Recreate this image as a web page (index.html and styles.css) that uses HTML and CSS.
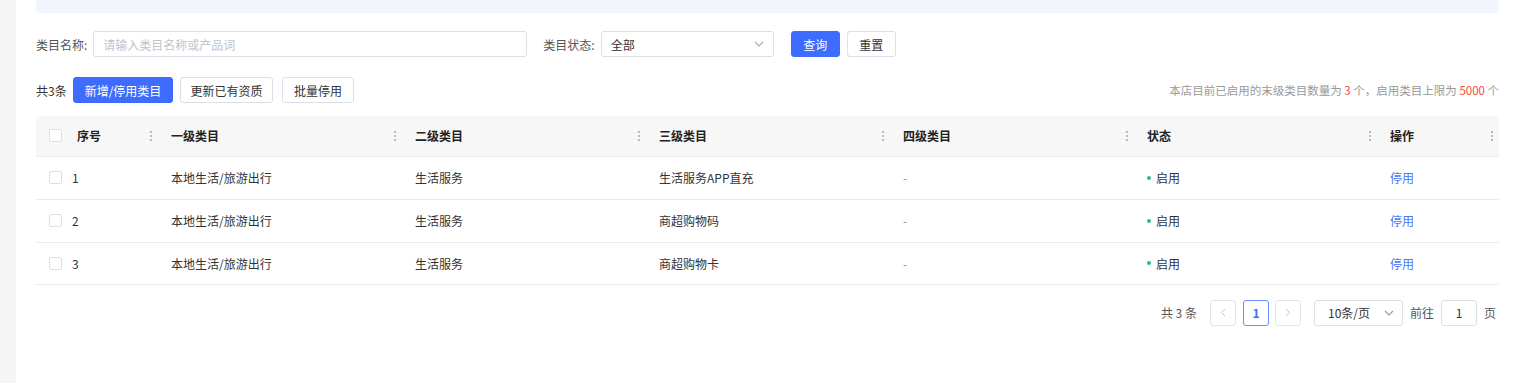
FILE: index.html
```html
<!DOCTYPE html>
<html lang="zh">
<head>
<meta charset="utf-8">
<link rel="stylesheet" href="styles.css">
</head>
<body>
<div class="page">
  <aside class="side"></aside>
  <main class="main">
    <div class="banner"></div>
    <div class="filters">
      <span class="label">类目名称:</span>
      <div class="input name-input"><span class="placeholder">请输入类目名称或产品词</span></div>
      <span class="label status-label">类目状态:</span>
      <div class="input select status-select"><span>全部</span>
        <svg class="arrow" width="10" height="6" viewBox="0 0 10 6"><path d="M1 1l4 4 4-4" fill="none" stroke="#aaa" stroke-width="1.1"/></svg>
      </div>
      <button class="btn primary search">查询</button>
      <button class="btn reset">重置</button>
    </div>
    <div class="toolbar">
      <span class="count">共3条</span>
      <button class="btn primary add">新增/停用类目</button>
      <button class="btn update">更新已有资质</button>
      <button class="btn batch">批量停用</button>
      <span class="info">本店目前已启用的末级类目数量为 <em>3</em> 个，启用类目上限为 <em>5000</em> 个</span>
    </div>
    <table class="grid">
      <colgroup>
        <col class="c0"><col class="c1"><col class="c1"><col class="c1"><col class="c1"><col class="c5"><col>
      </colgroup>
      <thead>
        <tr>
          <th><div class="first"><span class="cb"></span><span>序号</span></div><i class="sep"></i></th>
          <th>一级类目<i class="sep"></i></th>
          <th>二级类目<i class="sep"></i></th>
          <th>三级类目<i class="sep"></i></th>
          <th>四级类目<i class="sep"></i></th>
          <th>状态<i class="sep"></i></th>
          <th>操作<i class="sep last"></i></th>
        </tr>
      </thead>
      <tbody>
        <tr>
          <td><div class="first"><span class="cb"></span><span>1</span></div></td>
          <td>本地生活/旅游出行</td><td>生活服务</td><td>生活服务APP直充</td><td class="dash">-</td>
          <td><span class="dot"></span>启用</td><td><a class="link">停用</a></td>
        </tr>
        <tr>
          <td><div class="first"><span class="cb"></span><span>2</span></div></td>
          <td>本地生活/旅游出行</td><td>生活服务</td><td>商超购物码</td><td class="dash">-</td>
          <td><span class="dot"></span>启用</td><td><a class="link">停用</a></td>
        </tr>
        <tr>
          <td><div class="first"><span class="cb"></span><span>3</span></div></td>
          <td>本地生活/旅游出行</td><td>生活服务</td><td>商超购物卡</td><td class="dash">-</td>
          <td><span class="dot"></span>启用</td><td><a class="link">停用</a></td>
        </tr>
      </tbody>
    </table>
    <div class="pager">
      <span class="total">共 3 条</span>
      <span class="pbtn prev"><svg width="6" height="9" viewBox="0 0 6 9"><path d="M5 1L1.5 4.5 5 8" fill="none" stroke="#c0c4cc" stroke-width="1"/></svg></span>
      <span class="pbtn active">1</span>
      <span class="pbtn next"><svg width="6" height="9" viewBox="0 0 6 9"><path d="M1 1l3.5 3.5L1 8" fill="none" stroke="#c0c4cc" stroke-width="1"/></svg></span>
      <div class="input select size-select"><span>10条/页</span>
        <svg class="arrow" width="10" height="6" viewBox="0 0 10 6"><path d="M1 1l4 4 4-4" fill="none" stroke="#999" stroke-width="1.1"/></svg>
      </div>
      <span class="goto">前往</span>
      <div class="input jump">1</div>
      <span class="goto end">页</span>
    </div>
  </main>
</div>
</body>
</html>
```
FILE: styles.css
```css
* { box-sizing: border-box; }
html, body { margin: 0; padding: 0; background: #fff; }
body {
  font-family: "Noto Sans CJK SC", "Noto Sans", sans-serif;
  font-size: 12px;
  color: #333;
}
.page { display: flex; min-height: 383px; }
.side { width: 16px; flex: none; background: #f5f5f6; }
.main { flex: 1; padding: 0 17px 0 20px; }
.banner {
  height: 13px;
  background: #f2f5fe;
  border-radius: 0 0 4px 4px;
}
.filters {
  display: flex;
  align-items: center;
  height: 26px;
  margin-top: 18px;
}
.label { color: #555; white-space: nowrap; }
.input {
  height: 26px;
  border: 1px solid #dcdfe6;
  border-radius: 3px;
  display: flex;
  align-items: center;
  padding: 0 9px;
  background: #fff;
}
.name-input { width: 434px; margin-left: 6px; }
.placeholder { color: #c0c4cc; }
.status-label { margin-left: 16px; }
.status-select { width: 173px; margin-left: 6px; justify-content: space-between; color: #333; }
.arrow { flex: none; }
.btn {
  height: 26px;
  border: 1px solid #dcdfe6;
  border-radius: 3px;
  background: #fff;
  color: #333;
  font: inherit;
  font-size: 12px;
  padding: 0;
  cursor: pointer;
}
.btn.primary { background: #3d6cfe; border-color: #3d6cfe; color: #fff; }
.search { width: 49px; margin-left: 17px; }
.reset { width: 49px; margin-left: 7px; }
.toolbar {
  display: flex;
  align-items: center;
  height: 26px;
  margin-top: 20px;
}
.count { width: 37px; }
.add { width: 100px; }
.update { width: 93px; margin-left: 7px; }
.batch { width: 72px; margin-left: 9px; }
.info { margin-left: auto; color: #999; font-size: 11.5px; }
.info em { font-style: normal; color: #f5483b; }
.grid {
  width: 100%;
  margin-top: 13px;
  border-collapse: collapse;
  table-layout: fixed;
}
.c0 { width: 125px; }
.c1 { width: 244px; }
.c5 { width: 243px; }
th, td {
  text-align: left;
  padding: 0 0 0 10px;
  position: relative;
  white-space: nowrap;
}
th {
  height: 40px;
  background: #f7f7f7;
  font-weight: 700;
  color: #222;
  border-bottom: 1px solid #efefef;
}
td { height: 43px; border-bottom: 1px solid #ebebeb; color: #333; }
tbody tr:last-child td { height: 42px; }
th:first-child, td:first-child { padding-left: 13px; }
.first { display: flex; align-items: center; }
.cb {
  width: 13px;
  height: 13px;
  border: 1px solid #dcdfe6;
  border-radius: 2px;
  background: #fff;
  margin-right: 15px;
  flex: none;
}
td .first span:last-child { margin-left: -5px; }
.sep {
  position: absolute;
  right: 9px;
  top: 14px;
  width: 2px;
  height: 11px;
  background: radial-gradient(circle, #bbb 0.8px, transparent 1px) 0 0 / 2px 4px repeat-y;
}
.sep.last { right: 6px; }
.dash { color: #999; }
.dot {
  display: inline-block;
  width: 4px;
  height: 4px;
  border-radius: 50%;
  background: #1fc27a;
  margin-right: 5px;
  vertical-align: middle;
  position: relative;
  top: -2px;
}
.link { color: #4a74ff; cursor: pointer; }
.pager {
  display: flex;
  align-items: center;
  justify-content: flex-end;
  margin-top: 15px;
  height: 26px;
  color: #555;
}
.total { margin-right: 13px; }
.pbtn {
  width: 26px;
  height: 26px;
  border: 1px solid #e4e4e4;
  border-radius: 3px;
  display: flex;
  align-items: center;
  justify-content: center;
  color: #333;
}
.pbtn.prev { margin-right: 7px; }
.pbtn.active { border-color: #6f8ffe; color: #3d6cfe; font-weight: 700; margin-right: 6px; }
.pbtn.next { margin-right: 13px; }
.size-select { width: 89px; justify-content: space-between; padding: 0 8px 0 13px; color: #333; }
.goto { margin: 0 7px; color: #555; }
.jump { width: 36px; justify-content: center; color: #333; padding: 0; }
.goto.end { margin-right: 3px; }
```
